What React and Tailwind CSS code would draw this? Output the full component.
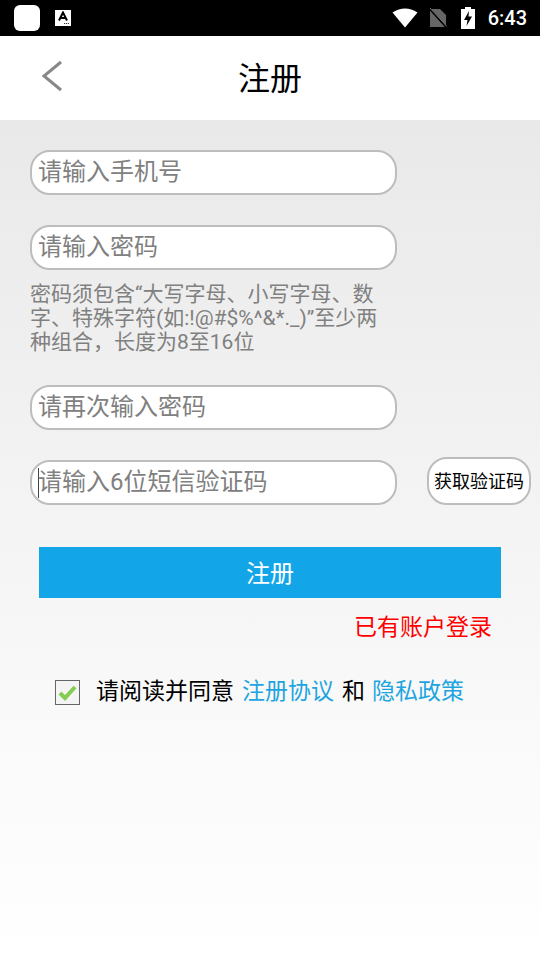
import React from "react";

const font = { fontFamily: '"Roboto", "Noto Sans CJK SC", sans-serif' };

const Field = ({ text, caret, className = "" }) => (
  <div className={`w-[367px] h-[45px] bg-white border-2 border-[#bdbdbd] rounded-[20px] flex items-center pl-[6px] pb-[2px] text-[24px] leading-none text-[#808080] ${className}`}>
    {caret && <span className="w-px h-[30px] mt-[2px] bg-[#444444] -mr-px" />}
    <span>{text}</span>
  </div>
);

const App = () => {
  return (
    <div className="w-[540px] h-[960px] flex flex-col overflow-hidden" style={font}>
      {/* status bar */}
      <div className="h-9 bg-black flex items-center shrink-0">
        <div className="ml-[14px] w-[26px] h-[26px] bg-white rounded-[6px]" />
        <div className="ml-[15px] w-4 h-4 bg-white flex items-center justify-center">
          <svg width="14" height="14" viewBox="0 0 14 14">
            <path d="M3 9.5 L7 1.5 L11 9.5 M4.4 7 H9.6" fill="none" stroke="#000" strokeWidth="2" />
            <path d="M8 12.5h1.2M10 12.5h1.2M12 12.5h1" stroke="#333" strokeWidth="1" />
          </svg>
        </div>
        <div className="ml-auto flex items-center mr-[13px]">
          <svg width="26" height="20" viewBox="0 0 26 20">
            <path d="M0.5 4.5 Q13 -3.5 25.5 4.5 L13 19.5 Z" fill="#fff" />
          </svg>
          <svg className="ml-[11px]" width="18" height="20" viewBox="0 0 18 20">
            <path d="M1 1H11L17 7V19H1Z" fill="#666" />
            <path d="M0 0L18 20" stroke="#000" strokeWidth="2" />
            <path d="M1 0L18 18.5" stroke="#777" strokeWidth="1" />
          </svg>
          <svg className="ml-[14px]" width="14" height="22" viewBox="0 0 14 22">
            <path d="M4 0H10V2H14V22H0V2H4Z" fill="#fff" />
            <path d="M8 4L3 13H6.5L5.5 19L11 9.5H7.5Z" fill="#000" />
          </svg>
          <span className="ml-[13px] text-[20px] leading-none font-medium text-white">6:43</span>
        </div>
      </div>

      {/* title bar */}
      <div className="h-[84px] bg-white flex items-center justify-center relative shrink-0">
        <svg className="absolute left-[40px] top-[23px]" width="24" height="34" viewBox="0 0 24 34">
          <path d="M21 3 L4 17 L21 31" fill="none" stroke="#888888" strokeWidth="3" />
        </svg>
        <h1 className="text-[32px] leading-none text-black font-normal mt-[2px]">注册</h1>
      </div>

      {/* form */}
      <div className="flex-1 bg-gradient-to-b from-[#e9e9e9] via-[#f9f9f9] via-70% to-white pt-[30px]">
        <Field text="请输入手机号" className="ml-[30px]" />
        <Field text="请输入密码" className="ml-[30px] mt-[30px]" />
        <p className="ml-[30px] mt-[12px] w-[356px] text-[21px] leading-[24px] text-[#808080]">
          密码须包含“大写字母、小写字母、数字、特殊字符(如:!@#$%^&amp;*._)”至少两种组合，长度为8至16位
        </p>
        <Field text="请再次输入密码" className="ml-[30px] mt-[31px]" />
        <div className="flex items-end mt-[27px] ml-[30px]">
          <Field text="请输入6位短信验证码" caret />
          <button className="ml-[30px] w-[104px] h-[48px] pt-[1px] bg-white border-2 border-[#bdbdbd] rounded-[20px] text-[18px] leading-none text-black">
            获取验证码
          </button>
        </div>
        <button className="block ml-[39px] mt-[42px] w-[462px] h-[51px] pt-[2px] bg-[#12a6e9] text-[24px] leading-none text-white">
          注册
        </button>
        <div className="mt-[15px] pr-[48px] text-right text-[23px] leading-[30px] text-[#ff0000]">已有账户登录</div>
        <div className="mt-[34px] ml-[55px] flex items-center text-[23px] leading-[30px]">
          <div className="w-[25px] h-[25px] border border-[#666666] bg-[#f4f4f4] flex items-center justify-center">
            <svg width="21" height="17" viewBox="0 0 21 17">
              <path d="M3 9 L8 14 L18 3" fill="none" stroke="#84cc52" strokeWidth="4" />
            </svg>
          </div>
          <span className="ml-[16px] text-black">请阅读并同意</span>
          <span className="ml-[8px] text-[#1ea5e0]">注册协议</span>
          <span className="ml-[8px] text-black">和</span>
          <span className="ml-[7px] text-[#1ea5e0]">隐私政策</span>
        </div>
      </div>
    </div>
  );
};

export default App;
